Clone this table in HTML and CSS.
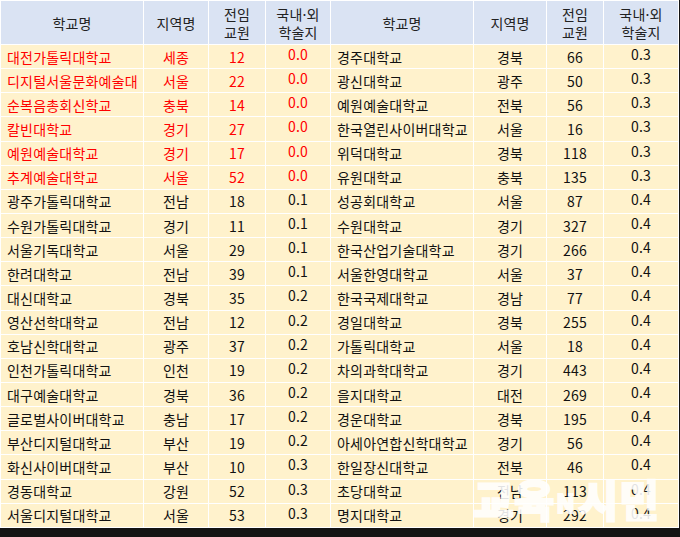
FILE: index.html
```html
<!DOCTYPE html>
<html lang="ko">
<head>
<meta charset="utf-8">
<link rel="stylesheet" href="styles.css">
</head>
<body>
<div class="wrap">
<table class="grid">
  <colgroup>
    <col class="c-name"><col class="c-reg"><col class="c-num"><col class="c-rate">
    <col class="c-name"><col class="c-reg2"><col class="c-num"><col class="c-rate2">
  </colgroup>
  <thead>
    <tr>
      <th>학교명</th><th>지역명</th><th>전임<br>교원</th><th>국내·외<br>학술지</th>
      <th>학교명</th><th>지역명</th><th>전임<br>교원</th><th>국내·외<br>학술지</th>
    </tr>
  </thead>
  <tbody>
    <tr class="red-l"><td class="n">대전가톨릭대학교</td><td>세종</td><td>12</td><td class="r">0.0</td><td class="n">경주대학교</td><td>경북</td><td>66</td><td class="r">0.3</td></tr>
    <tr class="red-l"><td class="n">디지털서울문화예술대</td><td>서울</td><td>22</td><td class="r">0.0</td><td class="n">광신대학교</td><td>광주</td><td>50</td><td class="r">0.3</td></tr>
    <tr class="red-l"><td class="n">순복음총회신학교</td><td>충북</td><td>14</td><td class="r">0.0</td><td class="n">예원예술대학교</td><td>전북</td><td>56</td><td class="r">0.3</td></tr>
    <tr class="red-l"><td class="n">칼빈대학교</td><td>경기</td><td>27</td><td class="r">0.0</td><td class="n">한국열린사이버대학교</td><td>서울</td><td>16</td><td class="r">0.3</td></tr>
    <tr class="red-l"><td class="n">예원예술대학교</td><td>경기</td><td>17</td><td class="r">0.0</td><td class="n">위덕대학교</td><td>경북</td><td>118</td><td class="r">0.3</td></tr>
    <tr class="red-l"><td class="n">추계예술대학교</td><td>서울</td><td>52</td><td class="r">0.0</td><td class="n">유원대학교</td><td>충북</td><td>135</td><td class="r">0.3</td></tr>
    <tr><td class="n">광주가톨릭대학교</td><td>전남</td><td>18</td><td class="r">0.1</td><td class="n">성공회대학교</td><td>서울</td><td>87</td><td class="r">0.4</td></tr>
    <tr><td class="n">수원가톨릭대학교</td><td>경기</td><td>11</td><td class="r">0.1</td><td class="n">수원대학교</td><td>경기</td><td>327</td><td class="r">0.4</td></tr>
    <tr><td class="n">서울기독대학교</td><td>서울</td><td>29</td><td class="r">0.1</td><td class="n">한국산업기술대학교</td><td>경기</td><td>266</td><td class="r">0.4</td></tr>
    <tr><td class="n">한려대학교</td><td>전남</td><td>39</td><td class="r">0.1</td><td class="n">서울한영대학교</td><td>서울</td><td>37</td><td class="r">0.4</td></tr>
    <tr><td class="n">대신대학교</td><td>경북</td><td>35</td><td class="r">0.2</td><td class="n">한국국제대학교</td><td>경남</td><td>77</td><td class="r">0.4</td></tr>
    <tr><td class="n">영산선학대학교</td><td>전남</td><td>12</td><td class="r">0.2</td><td class="n">경일대학교</td><td>경북</td><td>255</td><td class="r">0.4</td></tr>
    <tr><td class="n">호남신학대학교</td><td>광주</td><td>37</td><td class="r">0.2</td><td class="n">가톨릭대학교</td><td>서울</td><td>18</td><td class="r">0.4</td></tr>
    <tr><td class="n">인천가톨릭대학교</td><td>인천</td><td>19</td><td class="r">0.2</td><td class="n">차의과학대학교</td><td>경기</td><td>443</td><td class="r">0.4</td></tr>
    <tr><td class="n">대구예술대학교</td><td>경북</td><td>36</td><td class="r">0.2</td><td class="n">을지대학교</td><td>대전</td><td>269</td><td class="r">0.4</td></tr>
    <tr><td class="n">글로벌사이버대학교</td><td>충남</td><td>17</td><td class="r">0.2</td><td class="n">경운대학교</td><td>경북</td><td>195</td><td class="r">0.4</td></tr>
    <tr><td class="n">부산디지털대학교</td><td>부산</td><td>19</td><td class="r">0.2</td><td class="n">아세아연합신학대학교</td><td>경기</td><td>56</td><td class="r">0.4</td></tr>
    <tr><td class="n">화신사이버대학교</td><td>부산</td><td>10</td><td class="r">0.3</td><td class="n">한일장신대학교</td><td>전북</td><td>46</td><td class="r">0.4</td></tr>
    <tr><td class="n">경동대학교</td><td>강원</td><td>52</td><td class="r">0.3</td><td class="n">초당대학교</td><td>전남</td><td>113</td><td class="r">0.4</td></tr>
    <tr><td class="n">서울디지털대학교</td><td>서울</td><td>53</td><td class="r">0.3</td><td class="n">명지대학교</td><td>경기</td><td>292</td><td class="r">0.4</td></tr>
  </tbody>
</table>
<div class="mark"><span class="big">교육</span><span class="small">N</span><span class="big">시민</span></div>
</div>
</body>
</html>
```
FILE: styles.css
```css
html, body {
  margin: 0;
  padding: 0;
  background: #141414;
}
.wrap {
  position: relative;
  width: 680px;
  height: 537px;
  overflow: hidden;
}
.grid {
  table-layout: fixed;
  width: 679px;
  border-collapse: separate;
  border-spacing: 1px;
  background: #ffffff;
  font-family: "Noto Sans CJK KR", "Noto Sans", sans-serif;
  font-size: 14px;
  letter-spacing: 0.2px;
  color: #111;
}
.c-name { width: 142px; }
.c-reg { width: 64px; }
.c-num { width: 56px; }
.c-rate { width: 64px; }
.c-reg2 { width: 72px; }
.c-rate2 { width: 74px; }
th {
  background: #dae3f3;
  height: 43px;
  padding: 0;
  font-weight: normal;
  line-height: 18px;
  color: #222;
  text-align: center;
  vertical-align: middle;
}
td {
  background: #fff2cc;
  height: 23.15px;
  padding: 0;
  line-height: 16px;
  text-align: center;
  vertical-align: middle;
  white-space: nowrap;
  overflow: hidden;
}
td.n {
  text-align: left;
  padding-left: 6px;
}
td.r {
  padding-bottom: 5px;
  box-sizing: border-box;
}
tr.red-l td:nth-child(-n+4) {
  color: #ff0000;
}
.mark {
  position: absolute;
  left: 474px;
  top: 477px;
  display: flex;
  align-items: center;
  font-family: "Noto Sans CJK KR", sans-serif;
  font-weight: 700;
  color: #ffffff;
  -webkit-text-stroke: 3px #ffffff;
  opacity: 0.88;
  line-height: 1;
}
.mark .big {
  font-size: 43px;
  letter-spacing: 1px;
}
.mark .small {
  font-size: 25px;
  -webkit-text-stroke: 2px #ffffff;
  margin: 8px 4px 0 1px;
}
```
